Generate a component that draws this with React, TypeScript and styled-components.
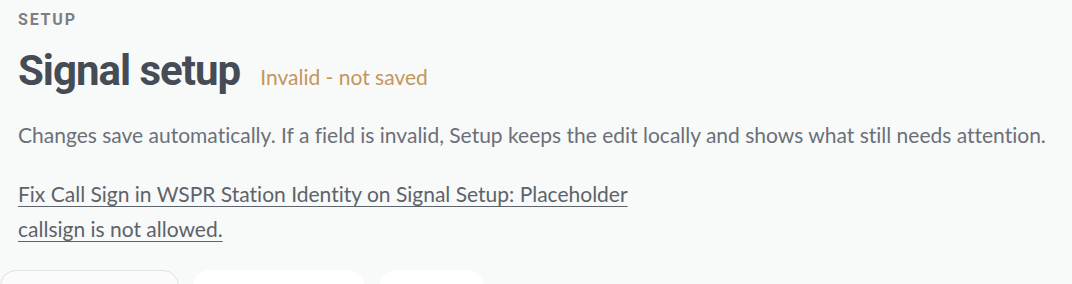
import styled, { createGlobalStyle } from 'styled-components';

const GlobalStyle = createGlobalStyle`
  html, body {
    margin: 0;
    padding: 0;
    background: #f8f9f9;
    overflow: hidden;
  }
  body {
    font-family: Lato, "Noto Sans", sans-serif;
    font-variant-ligatures: none;
  }
`;

const StPage = styled.main`
  padding: 11px 18px 0;
`;

const StEyebrow = styled.div`
  font-family: Roboto, "Liberation Sans", sans-serif;
  font-weight: 700;
  font-size: 16px;
  line-height: 18px;
  letter-spacing: 1.8px;
  color: #7b7f85;
  text-transform: uppercase;
`;

const StTitleRow = styled.div`
  display: flex;
  align-items: baseline;
  gap: 20px;
  margin-top: 18px;
`;

const StTitle = styled.h1`
  margin: 0;
  font-family: Roboto, "Liberation Sans", sans-serif;
  font-weight: 700;
  font-size: 42px;
  line-height: 48px;
  letter-spacing: -1px;
  color: #454c55;
`;

const StStatus = styled.span`
  font-size: 21px;
  color: #c4965a;
`;

const StLead = styled.p`
  margin: 26px 0 0;
  font-size: 21px;
  line-height: 28px;
  color: #6b7078;
`;

const StIssue = styled.a`
  display: block;
  max-width: 660px;
  margin-top: 27px;
  font-size: 21px;
  line-height: 35px;
  color: #5d636a;
  text-decoration: underline;
  text-decoration-thickness: 1px;
  text-underline-offset: 4px;
  cursor: pointer;
`;

const StTabs = styled.div`
  display: flex;
  gap: 14px;
  margin: 24px 0 0 -18px;
`;

const StTab = styled.button<{ $active?: boolean; $w: number }>`
  width: ${(p) => p.$w}px;
  height: 44px;
  border-radius: 16px;
  border: 1px solid ${(p) => (p.$active ? '#e0e1e2' : '#ffffff')};
  background: ${(p) => (p.$active ? '#fbfbfb' : '#ffffff')};
  flex-shrink: 0;
`;

export default function App() {
  return (
    <>
      <GlobalStyle />
      <StPage>
        <StEyebrow>Setup</StEyebrow>
        <StTitleRow>
          <StTitle>Signal setup</StTitle>
          <StStatus>Invalid - not saved</StStatus>
        </StTitleRow>
        <StLead>
          Changes save automatically. If a field is invalid, Setup keeps the edit locally and shows what
          still needs attention.
        </StLead>
        <StIssue>
          Fix Call Sign in WSPR Station Identity on Signal Setup: Placeholder callsign is not allowed.
        </StIssue>
        <StTabs>
          <StTab $active $w={179} />
          <StTab $w={172} />
          <StTab $w={105} />
        </StTabs>
      </StPage>
    </>
  );
}
